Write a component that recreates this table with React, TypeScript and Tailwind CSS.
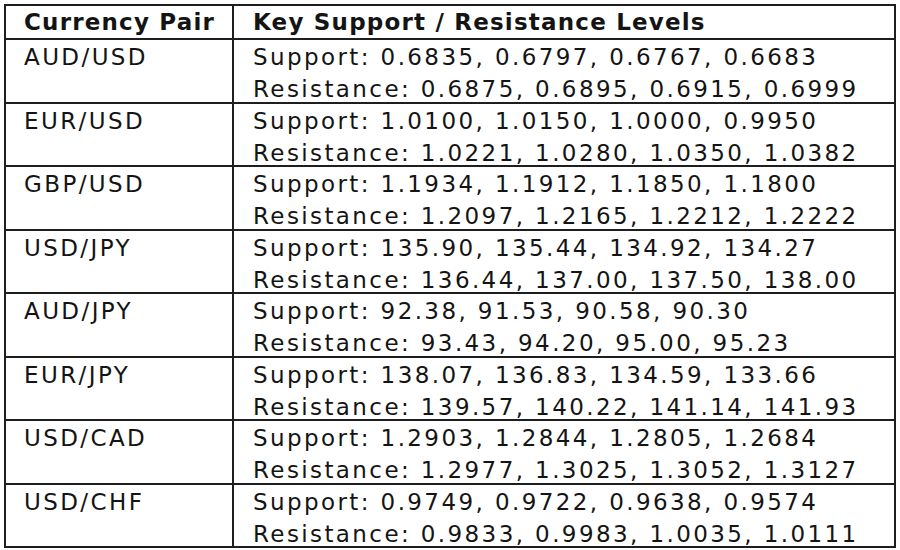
import React from "react";

const rows = [
  {
    pair: "AUD/USD",
    support: "0.6835, 0.6797, 0.6767, 0.6683",
    resistance: "0.6875, 0.6895, 0.6915, 0.6999",
  },
  {
    pair: "EUR/USD",
    support: "1.0100, 1.0150, 1.0000, 0.9950",
    resistance: "1.0221, 1.0280, 1.0350, 1.0382",
  },
  {
    pair: "GBP/USD",
    support: "1.1934, 1.1912, 1.1850, 1.1800",
    resistance: "1.2097, 1.2165, 1.2212, 1.2222",
  },
  {
    pair: "USD/JPY",
    support: "135.90, 135.44, 134.92, 134.27",
    resistance: "136.44, 137.00, 137.50, 138.00",
  },
  {
    pair: "AUD/JPY",
    support: "92.38, 91.53, 90.58, 90.30",
    resistance: "93.43, 94.20, 95.00, 95.23",
  },
  {
    pair: "EUR/JPY",
    support: "138.07, 136.83, 134.59, 133.66",
    resistance: "139.57, 140.22, 141.14, 141.93",
  },
  {
    pair: "USD/CAD",
    support: "1.2903, 1.2844, 1.2805, 1.2684",
    resistance: "1.2977, 1.3025, 1.3052, 1.3127",
  },
  {
    pair: "USD/CHF",
    support: "0.9749, 0.9722, 0.9638, 0.9574",
    resistance: "0.9833, 0.9983, 1.0035, 1.0111",
  },
];

export default function App() {
  return (
    <div className="h-[550px] w-[900px] bg-white pl-[4px] pt-[4px] font-['DejaVu_Sans',sans-serif] text-[#141414]">
      <div className="w-[892px] border-2 border-[#1e1e1e]">
        {/* header */}
        <div className="flex h-[34px] border-b-2 border-[#1e1e1e] text-[23px] font-bold leading-[32px] tracking-[1.2px]">
          <div className="w-[228px] flex-none border-r-2 border-[#1e1e1e] pl-[18px]">
            Currency Pair
          </div>
          <div className="pl-[19px]">Key Support / Resistance Levels</div>
        </div>

        {rows.map((r, i) => (
          <div
            key={r.pair}
            className={
              i < rows.length - 1
                ? "flex h-[63.5px] border-b-2 border-[#1e1e1e] text-[23px] leading-[32px] tracking-[2.4px]"
                : "flex h-[61.5px] text-[23px] leading-[32px] tracking-[2.4px]"
            }
          >
            <div className="w-[228px] flex-none border-r-2 border-[#1e1e1e] pl-[18px] pt-[1px]">
              {r.pair}
            </div>
            <div className="flex flex-col pl-[19px] pt-[1px]">
              <span>Support: {r.support}</span>
              <span>Resistance: {r.resistance}</span>
            </div>
          </div>
        ))}
      </div>
    </div>
  );
}
